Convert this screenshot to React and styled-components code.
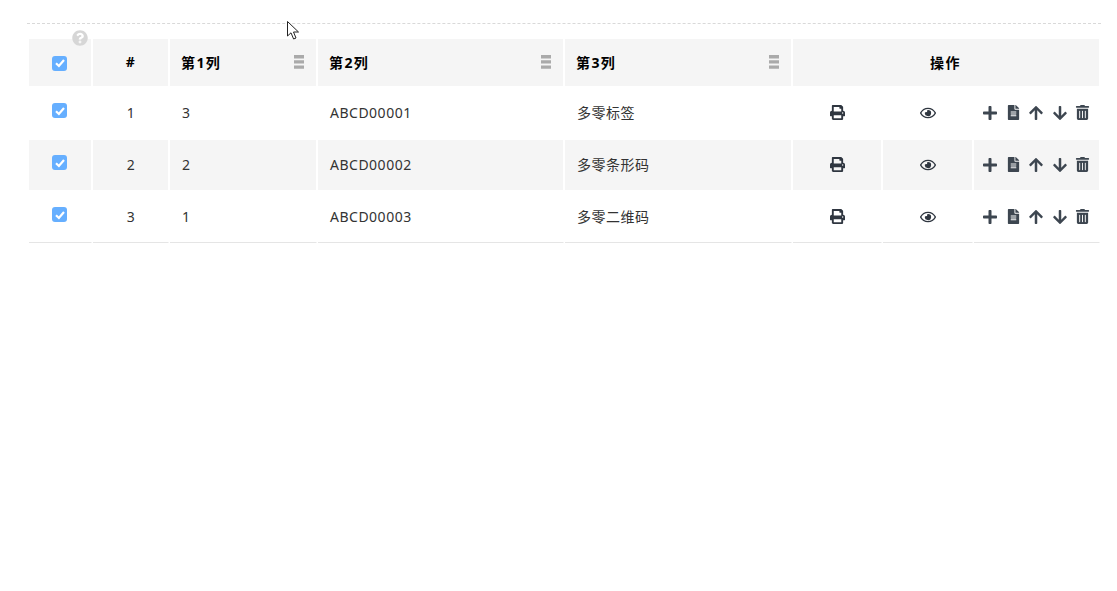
import React from 'react';
import styled, { createGlobalStyle } from 'styled-components';
import { FaPrint, FaRegEye, FaPlus, FaFileAlt, FaArrowUp, FaArrowDown, FaTrashAlt, FaQuestionCircle } from 'react-icons/fa';

const GlobalStyle = createGlobalStyle`
  html, body {
    margin: 0;
    padding: 0;
    background: #fff;
    font-family: "Noto Sans", "Noto Sans CJK SC", sans-serif;
    font-size: 14px;
    color: #333;
  }
`;

const Page = styled.div`
  position: relative;
  width: 1117px;
  height: 591px;
  padding: 23px 16px 0 27px;
  box-sizing: border-box;
  overflow: hidden;
`;

const Divider = styled.div`
  border-top: 1px dashed #d9d9d9;
  margin-bottom: 15px;
`;

const Table = styled.table`
  table-layout: fixed;
  width: 1073px;
  margin-left: 1px;
  border-collapse: separate;
  border-spacing: 1px 0;
`;

const Th = styled.th`
  height: 47px;
  padding: 0 12px 2px 11px;
  background: #f5f5f5;
  border-right: 1px solid #fff;
  box-sizing: border-box;
  color: #000;
  font-size: 14px;
  font-weight: 700;
  letter-spacing: 1.4px;
  text-align: ${(p) => (p.$left ? 'left' : 'center')};
`;

const CheckTh = styled(Th)`
  padding-bottom: 0;
`;

const IndexTh = styled(Th)`
  padding-left: 13px;
`;

const HeadInner = styled.div`
  display: flex;
  align-items: center;
  justify-content: space-between;
`;

const Td = styled.td`
  height: ${(p) => (p.$last ? 53 : 52)}px;
  padding: 0 12px 2px;
  box-sizing: border-box;
  background: ${(p) => (p.$striped ? '#f5f5f5' : '#fff')};
  border-top: 2px solid #fff;
  border-bottom: ${(p) => (p.$last ? '1px solid #e5e5e5' : '0')};
  border-right: 1px solid #fff;
  text-align: ${(p) => (p.$left ? 'left' : 'center')};
  color: #333;
  letter-spacing: 0.5px;
  white-space: nowrap;
`;

const CheckTd = styled(Td)`
  padding-left: 11px;
`;

const IndexTd = styled(Td)`
  padding-left: 13px;
`;

const IconTd = styled(Td)`
  padding-bottom: 1px;
`;

const ActionTd = styled(IconTd)`
  padding-left: 8px;
  padding-right: 9px;
`;

const Check = styled.span`
  display: inline-flex;
  align-items: center;
  justify-content: center;
  width: 15px;
  height: 15px;
  border-radius: 3px;
  background: #66afff;
  position: relative;
  top: ${(p) => (p.$head ? '1px' : '-1px')};
`;

const Grip = () => (
  <svg width="10" height="14" viewBox="0 0 10 14">
    <path d="M0 0h10v3.4H0zM0 5.2h10v3.4H0zM0 10.4h10v3.4H0z" fill="#aaa" />
  </svg>
);

const IconCell = styled.span`
  display: flex;
  align-items: center;
  justify-content: center;
  color: #2f3640;
  svg {
    height: ${(p) => p.$size || 15}px;
    width: auto;
  }
`;

const ActionRow = styled.div`
  display: flex;
  align-items: center;
  justify-content: space-between;
  color: #3d4650;
  svg {
    flex: none;
    height: 15px;
    width: auto;
  }
`;

const BigIcon = styled.span`
  display: flex;
  svg {
    height: 16px;
  }
`;

const Help = styled(FaQuestionCircle)`
  position: absolute;
  left: 72px;
  top: 30px;
  width: 16px;
  height: 16px;
  color: #d6d6d6;
`;

const Cursor = styled.svg`
  position: absolute;
  left: 286px;
  top: 20px;
  width: 15px;
  height: 21px;
`;

const rows = [
  { id: 1, a: '3', b: 'ABCD00001', c: '多零标签' },
  { id: 2, a: '2', b: 'ABCD00002', c: '多零条形码' },
  { id: 3, a: '1', b: 'ABCD00003', c: '多零二维码' },
];

const Tick = () => (
  <svg width="12" height="12" viewBox="0 0 12 12">
    <path d="M2 6.2 L4.9 9 L10 3" fill="none" stroke="#fff" strokeWidth="2.2" />
  </svg>
);

export default function App() {
  return (
    <Page>
      <GlobalStyle />
      <Divider />
      <Help />
      <Cursor viewBox="0 0 15 21">
        <path d="M1.5 1.5 V16 L5 12.8 L7.6 19 L10 18 L7.5 12 H12.5 Z" fill="#fff" stroke="#222" strokeWidth="1" />
      </Cursor>
      <Table>
        <colgroup>
          <col style={{ width: 63 }} />
          <col style={{ width: 76 }} />
          <col style={{ width: 147 }} />
          <col style={{ width: 246 }} />
          <col style={{ width: 227 }} />
          <col style={{ width: 89 }} />
          <col style={{ width: 90 }} />
          <col style={{ width: 126 }} />
        </colgroup>
        <thead>
          <tr>
            <CheckTh><Check $head><Tick /></Check></CheckTh>
            <IndexTh>#</IndexTh>
            <Th $left><HeadInner>第1列<Grip /></HeadInner></Th>
            <Th $left><HeadInner>第2列<Grip /></HeadInner></Th>
            <Th $left><HeadInner>第3列<Grip /></HeadInner></Th>
            <Th colSpan={3}>操作</Th>
          </tr>
        </thead>
        <tbody>
          {rows.map((r, i) => {
            const striped = i === 1;
            const last = i === rows.length - 1;
            return (
              <tr key={r.id}>
                <CheckTd $striped={striped} $last={last}><Check><Tick /></Check></CheckTd>
                <IndexTd $striped={striped} $last={last}>{r.id}</IndexTd>
                <Td $left $striped={striped} $last={last}>{r.a}</Td>
                <Td $left $striped={striped} $last={last}>{r.b}</Td>
                <Td $left $striped={striped} $last={last}>{r.c}</Td>
                <IconTd $striped={striped} $last={last}><IconCell><FaPrint /></IconCell></IconTd>
                <IconTd $striped={striped} $last={last}><IconCell $size={16}><FaRegEye /></IconCell></IconTd>
                <ActionTd $striped={striped} $last={last}>
                  <ActionRow>
                    <BigIcon><FaPlus /></BigIcon>
                    <FaFileAlt />
                    <BigIcon><FaArrowUp /></BigIcon>
                    <BigIcon><FaArrowDown /></BigIcon>
                    <FaTrashAlt />
                  </ActionRow>
                </ActionTd>
              </tr>
            );
          })}
        </tbody>
      </Table>
    </Page>
  );
}
